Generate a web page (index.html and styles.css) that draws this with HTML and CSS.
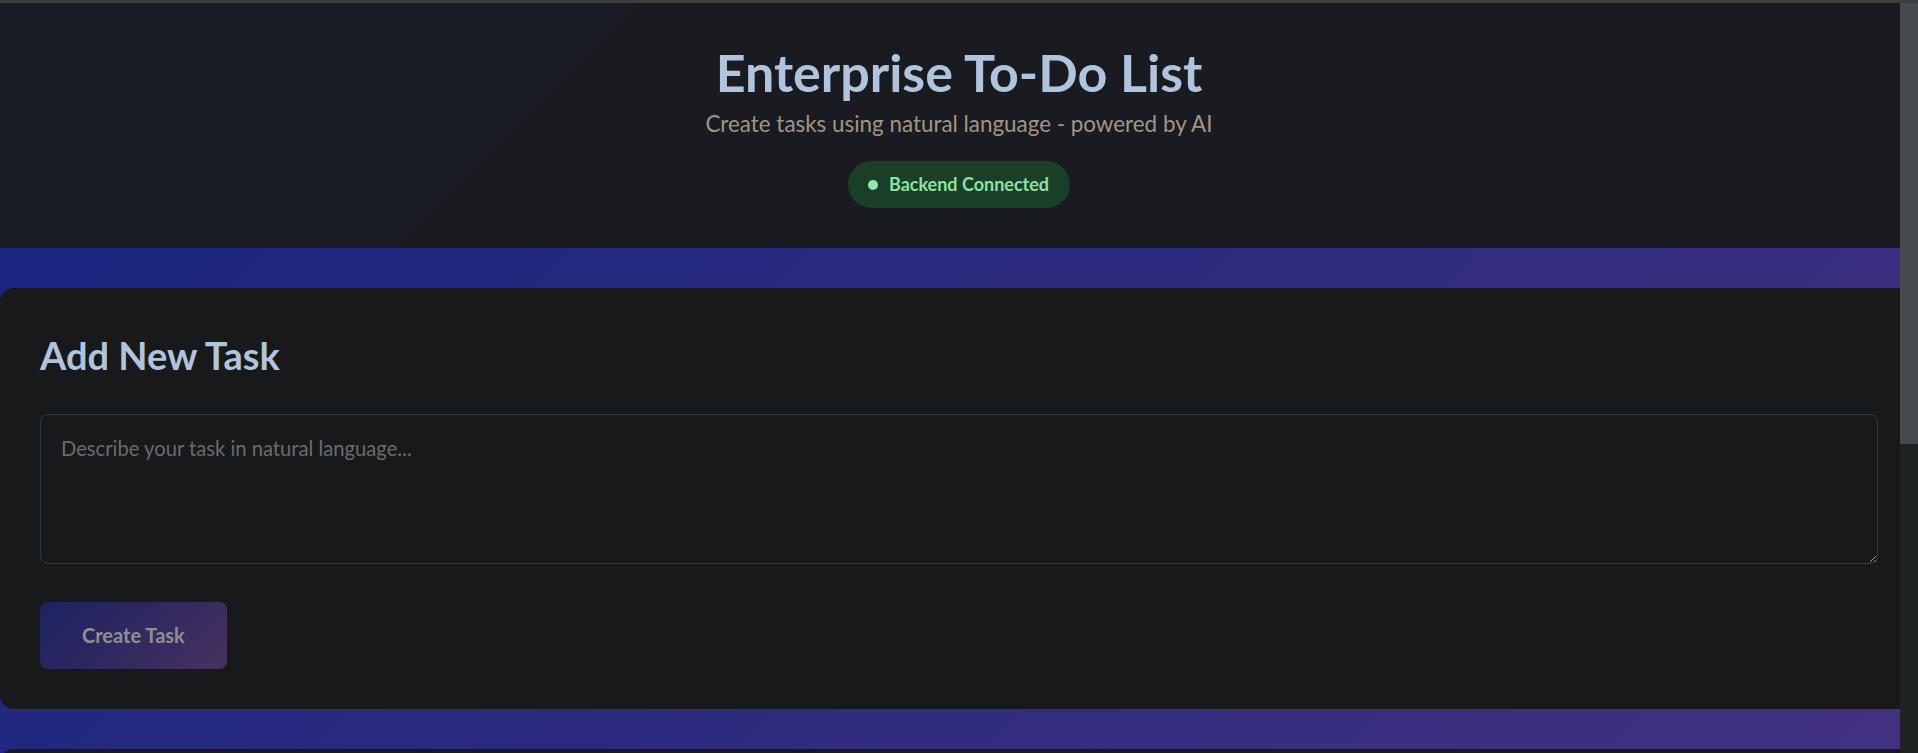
FILE: index.html
```html
<!DOCTYPE html>
<html lang="en">
<head>
<meta charset="utf-8">
<title>Enterprise To-Do List</title>
<link rel="stylesheet" href="styles.css">
</head>
<body>
  <div class="top-strip"></div>

  <header class="app-header">
    <h1 class="app-title">Enterprise To-Do List</h1>
    <p class="app-subtitle">Create tasks using natural language - powered by AI</p>
    <div class="status-badge"><span class="status-dot"></span><span>Backend Connected</span></div>
  </header>

  <section class="card">
    <h2 class="card-title">Add New Task</h2>
    <textarea class="task-input" placeholder="Describe your task in natural language..."></textarea>
    <button class="create-btn" type="button">Create Task</button>
  </section>

  <section class="card card-list"></section>

  <div class="scrollbar" aria-hidden="true"><div class="scrollbar-thumb"></div></div>
</body>
</html>
```

FILE: styles.css
```css
html {
  overflow: hidden;
}

body {
  margin: 0;
  padding: 0 0 40px;
  font-family: "Lato", "Segoe UI", sans-serif;
  background: linear-gradient(135deg, #16247f 0%, #4c347f 100%);
}

.top-strip {
  height: 3px;
  background: #3e3e3e;
}

/* window scrollbar drawn over the page edge */
.scrollbar {
  position: fixed;
  top: 0;
  right: 0;
  width: 18px;
  height: 100vh;
  box-sizing: border-box;
  border-top: 3px solid #3e3e3e;
  background: #202324;
}

.scrollbar-thumb {
  height: 441px;
  background: #464a4d;
}

.app-header {
  padding: 38px 0 40px;
  text-align: center;
  background: linear-gradient(135deg, #191c24 0%, #191c24 29.5%, #1a1b20 29.5%, #1a1b20 100%);
}

.app-title {
  margin: 0;
  font-size: 52px;
  line-height: 1.2;
  font-weight: 700;
  color: #b0c4de;
}

.app-subtitle {
  margin: 8px 0 0;
  font-size: 22.4px;
  line-height: 1.2;
  color: #a09686;
}

.status-badge {
  display: inline-flex;
  align-items: center;
  gap: 11px;
  margin-top: 23px;
  padding: 12.7px 21px 12.7px 20px;
  border-radius: 999px;
  background: #193f28;
  color: #90e0a0;
  font-size: 18px;
  font-weight: 700;
  line-height: 1.2;
}

.status-dot {
  width: 10px;
  height: 10px;
  border-radius: 50%;
  background: #95e6aa;
}

.card {
  margin-top: 40px;
  padding: 40px;
  border-radius: 14px;
  background: #18191b;
}

.card-title {
  margin: 5px 0 0;
  font-size: 38px;
  line-height: 1.2;
  font-weight: 700;
  color: #b0c4de;
}

.task-input {
  display: block;
  width: 100%;
  height: 150px;
  box-sizing: border-box;
  margin-top: 35px;
  padding: 20px;
  border: 1px solid #2b3b48;
  border-radius: 8px;
  background: #18191b;
  color: #d0d0d0;
  font-family: "Lato", "Segoe UI", sans-serif;
  font-size: 20.2px;
  line-height: 1.3;
  resize: vertical;
  outline: none;
}

.task-input::placeholder {
  color: #6b6b6b;
}

.create-btn {
  display: block;
  margin-top: 38px;
  padding: 21.5px 42px;
  border: none;
  border-radius: 8px;
  background: linear-gradient(135deg, #1a2262 0%, #48305f 100%);
  color: #8f8f8f;
  font-family: "Lato", "Segoe UI", sans-serif;
  font-size: 20px;
  font-weight: 700;
  line-height: 1.2;
}

.card-list {
  min-height: 487px;
}
```
